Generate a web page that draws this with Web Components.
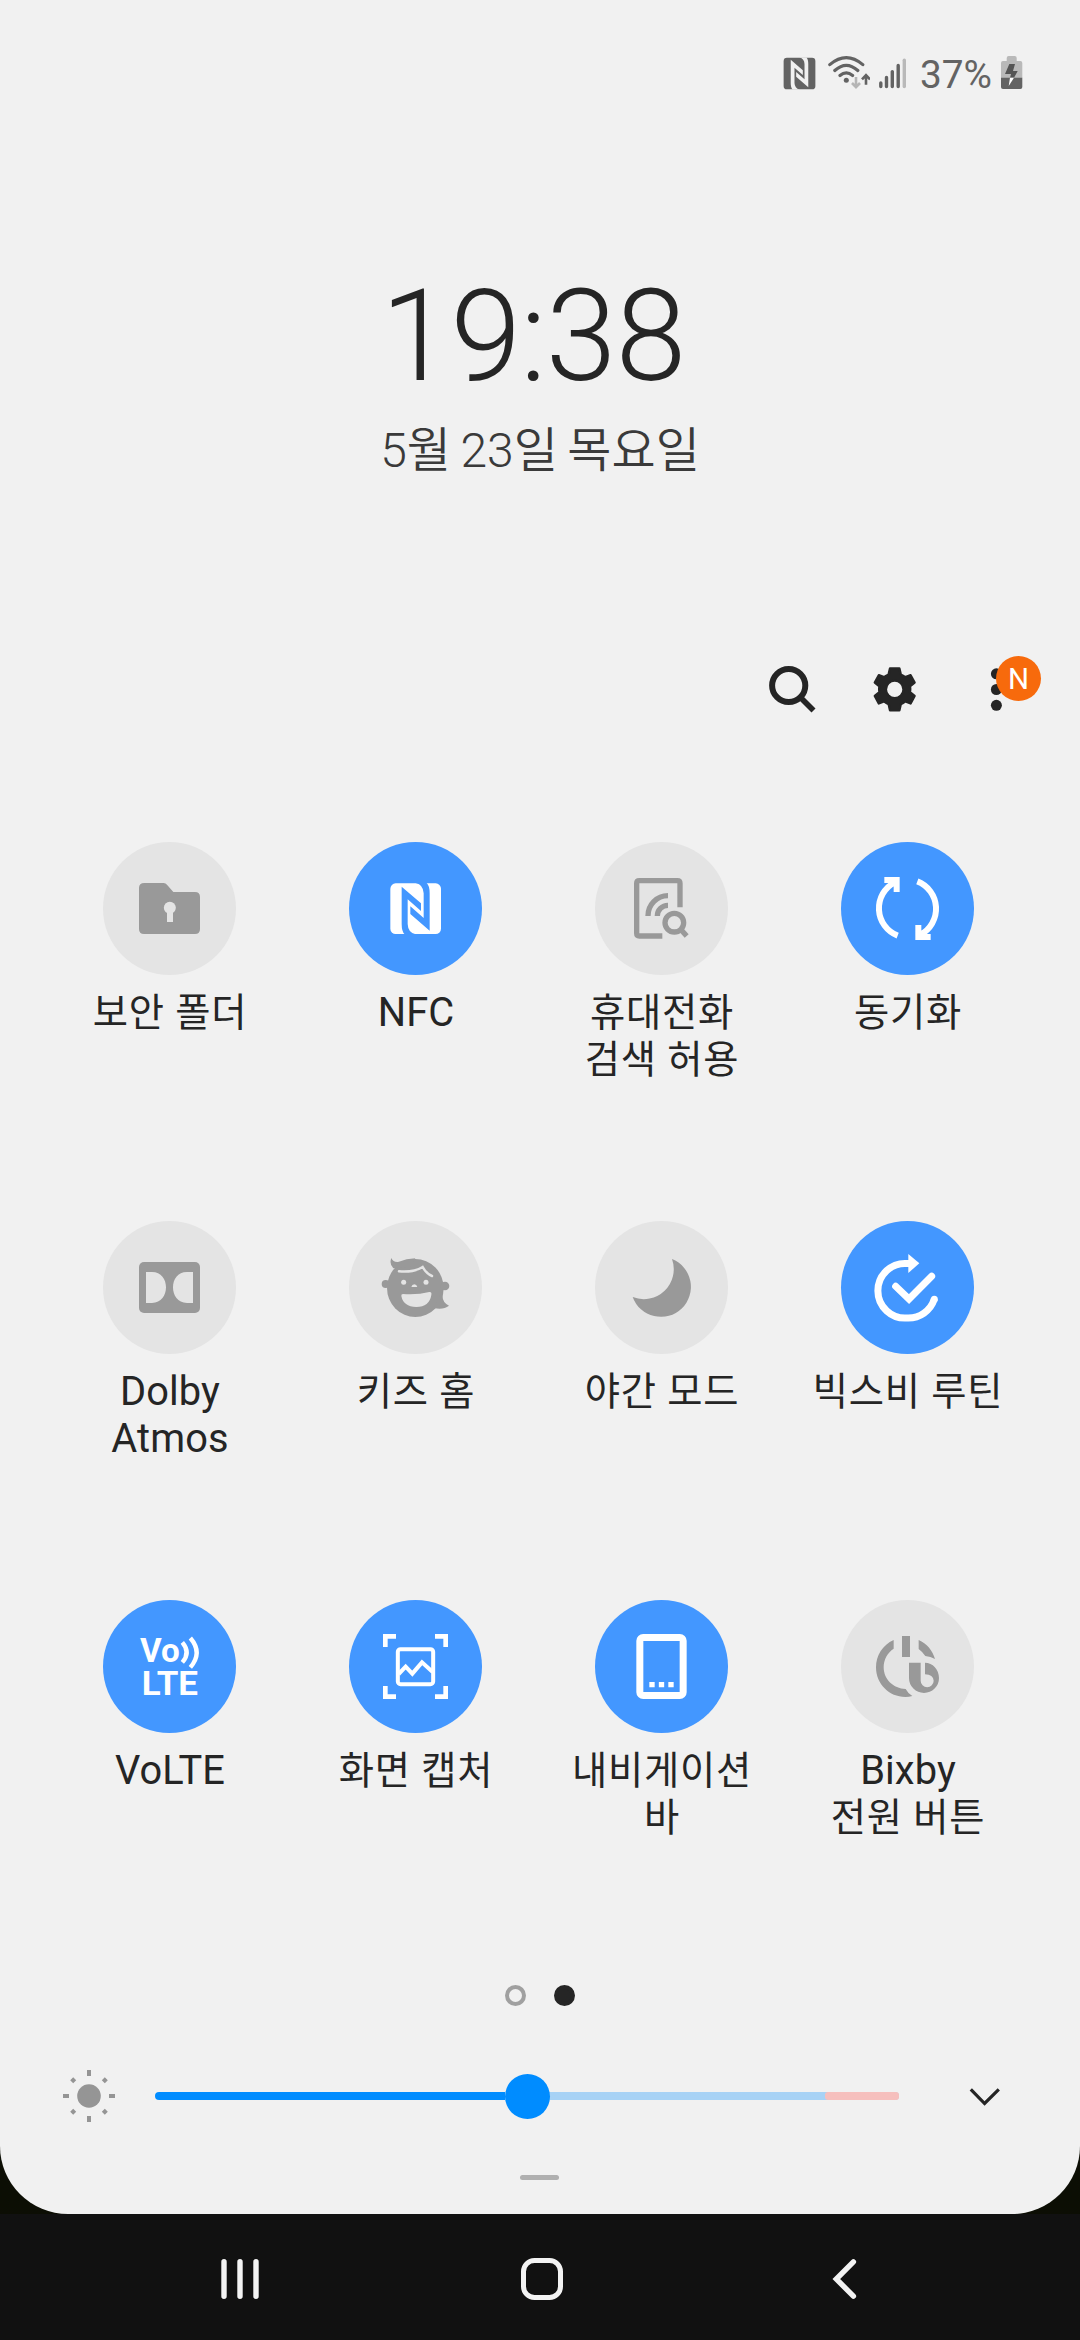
<!DOCTYPE html>
<html lang="ko">
<head>
<meta charset="utf-8">
<title>빠른 설정</title>
<style>
html,body{margin:0;padding:0}
body{width:1080px;height:2340px;overflow:hidden;background:#0c0e04;font-family:Roboto,"Noto Sans CJK KR",sans-serif}
</style>
</head>
<body>
<quick-panel>
  <status-bar></status-bar>
  <panel-clock><span slot="time">19:38</span><span slot="date">5월 23일 목요일</span></panel-clock>
  <panel-tools></panel-tools>
  <tile-grid>
    <quick-tile icon="folder"><span>보안 폴더</span></quick-tile>
    <quick-tile icon="nfc" on><span class="latin">NFC</span></quick-tile>
    <quick-tile icon="find"><span>휴대전화</span><span>검색 허용</span></quick-tile>
    <quick-tile icon="sync" on><span>동기화</span></quick-tile>
    <quick-tile icon="dolby"><span class="latin">Dolby</span><span class="latin">Atmos</span></quick-tile>
    <quick-tile icon="kids"><span>키즈 홈</span></quick-tile>
    <quick-tile icon="moon"><span>야간 모드</span></quick-tile>
    <quick-tile icon="routine" on><span>빅스비 루틴</span></quick-tile>
    <quick-tile icon="volte" on><span class="latin">VoLTE</span></quick-tile>
    <quick-tile icon="capture" on><span>화면 캡처</span></quick-tile>
    <quick-tile icon="navbar" on><span>내비게이션</span><span>바</span></quick-tile>
    <quick-tile icon="bixby"><span class="latin">Bixby</span><span>전원 버튼</span></quick-tile>
  </tile-grid>
  <page-dots></page-dots>
  <brightness-row></brightness-row>
  <panel-handle></panel-handle>
</quick-panel>
<nav-bar></nav-bar>
<script>
const define = (name, html) => customElements.define(name, class extends HTMLElement {
  constructor() {
    super();
    this.attachShadow({ mode: 'open' }).innerHTML = html;
  }
});

const NFC = `<rect x="931" y="190" width="152" height="152" rx="16" fill="currentColor"/>
<path fill="var(--cut)" d="M965 200L1023 250V273L983 238V312Q984 338 1007 343H974Q965 335 965 312ZM1049 332L991 282V259L1031 294V220Q1030 194 1007 189H1040Q1049 197 1049 220Z"/>`;

define('quick-panel', `<style>
:host{display:flex;flex-direction:column;height:2214px;background:#f1f1f1;border-radius:0 0 68px 68px;overflow:hidden;color:#252525}
</style><slot></slot>`);

define('status-bar', `<style>
:host{display:flex;height:146px;align-items:center;justify-content:flex-end;padding-right:57px;color:#636363;--cut:#f1f1f1}
svg{display:block;flex:none}
.wifi{margin-left:12px}.signal{margin-left:8px}
.pct{width:81px;margin-left:13px;padding-top:4px;font-size:38.8px;line-height:46px;white-space:nowrap}
</style>
<svg width="33" height="33" viewBox="928 188 158 156">${NFC}</svg>
<svg class="wifi" width="42" height="36" viewBox="828 55 42 36" fill="none" stroke="#636363" stroke-width="3.2">
<path d="M829.8 64.6Q846.3 50.6 862.8 64.6M834.8 70.5Q846.3 60.2 857.8 70.5M840 75.5Q846.3 70.3 852.6 75.5" stroke-linecap="round"/>
<circle cx="846.3" cy="80.2" r="2.5" fill="#636363" stroke="none"/>
<path d="M856 77V87M852 83L856 87.2L860 83" stroke="#b5b5b5" stroke-width="2.6"/>
<path d="M866 84.7V75M862 79.4L866 75.2L870 79.4" stroke-width="2.6"/></svg>
<svg class="signal" width="29" height="36" viewBox="878 55 29 36" fill="none" stroke="#636363" stroke-width="3.4" stroke-linecap="round">
<path d="M880.8 83V86.6M886.5 77.4V86.6M892.3 71.6V86.6M898.2 65.4V86.6"/><path d="M904.3 60.2V86.6" stroke="#b9b9b9"/></svg>
<span class="pct">37%</span>
<svg width="22" height="36" viewBox="1001 55 22 36"><path fill="#b9b9b9" d="M1006.7 61V58Q1006.7 56 1008.7 56H1014.7Q1016.7 56 1016.7 58V61H1020.3Q1022.3 61 1022.3 63V78H1001V63Q1001 61 1003 61Z"/>
<path fill="#636363" d="M1001 77.8H1022.3V87Q1022.3 89 1020.3 89H1003Q1001 89 1001 87Z"/>
<path fill="#555" d="M1009.3 64H1015L1013 71H1017.7L1014 77.8H1010L1011 74H1005Z"/><path fill="#fff" d="M1010 77.8H1014L1008.7 86Z"/></svg>`);

define('panel-clock', `<style>
:host{display:flex;flex-direction:column;align-items:center;padding-top:116px;font-weight:300}
.time{font-size:127.5px;line-height:150px;height:150px;letter-spacing:-1px;margin-right:14px;white-space:nowrap}
.date{font-size:48px;line-height:58px;height:58px;margin-top:10px;color:#3a3a3a;white-space:nowrap;font-weight:350;word-spacing:-2.2px}
</style><div class="time"><slot name="time"></slot></div><div class="date"><slot name="date"></slot></div>`);

define('panel-tools', `<style>
:host{display:flex;justify-content:flex-end;height:80px;margin-top:169px;padding-right:38px}
svg{display:block;flex:none}.gear{margin-left:54px}
.more{position:relative;margin-left:70px;width:52px;height:80px}
.badge{position:absolute;left:6px;top:7px;width:45px;height:45px;border-radius:50%;background:#f76a0c;color:#fff;font-size:29.5px;line-height:46px;text-align:center}
</style>
<svg width="50" height="80" viewBox="766 649 50 80" fill="none" stroke="#252525"><circle cx="788.7" cy="685.5" r="16.6" stroke-width="6"/><path d="M800 697L813.5 710.5" stroke-width="5.6"/></svg>
<svg class="gear" width="50" height="80" viewBox="870 649 50 80"><path fill="#252525" fill-rule="evenodd" stroke="#252525" stroke-width="2.4" stroke-linejoin="round" d="M890 668.5H899.4L900.8 674.5Q903 675.4 905.4 677.2L910.6 675.2L914.6 682.6L910 686.3Q910.5 689.3 910 692.3L914.6 696L910.6 703.4L905.4 701.4Q903 703.2 900.8 704.1L899.4 710.3H890L888.6 704.1Q886.4 703.2 884 701.4L878.8 703.4L874.8 696L879.4 692.3Q878.9 689.3 879.4 686.3L874.8 682.6L878.8 675.2L884 677.2Q886.4 675.4 888.6 674.5ZM894.7 680.6A8.8 8.8 0 1 0 894.7 698.2A8.8 8.8 0 1 0 894.7 680.6Z"/></svg>
<div class="more"><svg width="52" height="80" viewBox="990 649 52 80" fill="#252525"><circle cx="996.4" cy="673.8" r="5.5"/><circle cx="996.4" cy="689.5" r="5.5"/><circle cx="996.4" cy="705.3" r="5.5"/></svg><div class="badge">N</div></div>`);

define('tile-grid', `<style>
:host{display:grid;grid-template-columns:repeat(4,246px);grid-auto-rows:379px;margin-top:113px;padding-left:46.5px;padding-right:49.5px}
</style><slot></slot>`);

/* Each icon: origin of its 399-unit square, then its shapes. */
const ICONS = {
folder: ['69 66', `<path fill="currentColor" d="M193 189H251Q257 189 261 194L280 216H345Q360 216 360 231V327Q360 342 345 342H192Q177 342 177 327V204Q177 189 193 189Z"/><circle cx="269.500" cy="263" r="18" fill="var(--cut)"/><path fill="var(--cut)" d="M261 270H279V306H261Z"/>`],
nfc: ['807 66', NFC],
find: ['105 66', `<g fill="none" stroke="currentColor" stroke-width="16"><path d="M307 348H238Q230 348 230 340V190Q230 182 238 182H352Q360 182 360 190V262M264 288A60 60 0 0 1 324 227M292 288A32 32 0 0 1 324 256"/><circle cx="343" cy="308" r="28"/><path d="M361 327L380 348"/></g>`],
sync: ['843 66', `<path fill="none" stroke="currentColor" stroke-width="18" d="M1013 347A88 88 0 0 1 1004 187M1072 184A88 88 0 0 1 1081 344M973 180H1010V216M1112 351H1075V315"/>`],
dolby: ['69 63', `<rect x="177" y="186" width="183" height="153" rx="15" fill="currentColor"/><path fill="var(--cut)" d="M198 216H216C244 216 258 238 258 262S244 309 216 309H198ZM339 216H321C293 216 279 238 279 262S293 309 321 309H339Z"/>`],
kids: ['807 63', `<g fill="currentColor"><ellipse cx="1006" cy="264" rx="85" ry="87"/><circle cx="917" cy="252" r="12"/><circle cx="1095" cy="258" r="13"/><path d="M940 205Q927 192 934 174Q939 187 954 186Q980 175 1006 174.500L990 200ZM1091 264Q1079 305 1107 317Q1090 330 1062 324Z"/></g><g fill="var(--cut)"><circle cx="971" cy="247" r="7.500"/><circle cx="1038" cy="247" r="7.500"/><path d="M994 261Q996 253 1003 253T1012 261ZM969 282Q1012 285 1048 276Q1056 275 1054 285Q1048 321 1009 321Q970 320 964 288Q963 282 969 282Z"/></g><path fill="none" stroke="var(--cut)" stroke-width="7.500" stroke-linecap="round" d="M957 214Q1001 218 1028 201Q1040 222 1056 228"/>`],
moon: ['105 63', `<path fill="currentColor" d="M336 177A90 90 0 1 1 218 291A90 90 0 0 0 336 177Z"/>`],
routine: ['843 63', `<g fill="none" stroke="currentColor" stroke-width="21"><path d="M1047 190.500H1042A82 82 0 1 0 1042 354A82 82 0 0 0 1123 297"/><circle cx="1123" cy="298" r="10.500" fill="currentColor" stroke="none"/><path stroke-linecap="round" d="M1007 259L1047 297L1115 229"/></g><path fill="currentColor" d="M1045 162L1078 190L1045 219Z"/>`],
volte: ['69 60', `<g fill="currentColor" font-family="Roboto" font-weight="700"><text x="180" y="246" font-size="97" textLength="119" lengthAdjust="spacingAndGlyphs">Vo</text><text x="185" y="345" font-size="102" textLength="169" lengthAdjust="spacingAndGlyphs">LTE</text></g><path fill="none" stroke="currentColor" stroke-width="13" d="M307 187Q333 218 307 247M331 174Q369 218 331 262"/>`],
capture: ['807 60', `<g fill="none" stroke="currentColor" stroke-width="14"><path d="M916 201V169H948M1065 169H1097V201M916 318V350H948M1065 350H1097V318"/><rect x="953.500" y="207.500" width="106" height="105" rx="8" stroke-width="12"/><path stroke-width="12" d="M956 282L977 260L997 281L1026 247L1058 276"/></g>`],
navbar: ['105 60', `<rect x="239.500" y="172.500" width="130" height="174" rx="10" fill="none" stroke="currentColor" stroke-width="21"/><path fill="currentColor" d="M268 306h16v16h-16ZM296.500 306h16v16h-16ZM325 306h16v16h-16Z"/>`],
bixby: ['843 60', `<path fill="currentColor" d="M1026 168H1050V231H1026ZM1001 180C968 195 948 226 948 262C948 312 988 351 1036 351Q1047 351 1057 348Q1045 342 1037 327C1000 326 971 298 971 262C971 238 983 218 1001 206ZM1076 180C1100 190 1118 212 1125 237Q1112 229 1096 228Q1088 216 1076 207ZM1047 248H1082V302A19.500 19.500 0 0 0 1121 302Q1120 284 1095 283V248C1118 248 1137 268 1137 294A45 45 0 0 1 1047 294Z"/>`]
};

customElements.define('quick-tile', class extends HTMLElement {
  connectedCallback() {
    if (this.shadowRoot) return;
    const [origin, art] = ICONS[this.getAttribute('icon')];
    this.attachShadow({ mode: 'open' }).innerHTML = `<style>
:host{display:flex;flex-direction:column;align-items:center;color:#252525}
.disc{width:133px;height:133px;border-radius:50%;--cut:#e4e4e4;background:var(--cut);color:#999}
:host([on]) .disc{--cut:#4397ff;color:#fff}
svg{display:block}
.label{display:flex;flex-direction:column;align-items:center;margin-top:14px;padding-left:1px;font-size:38.3px;letter-spacing:.8px}
::slotted(span){display:block;height:47px;line-height:47px;white-space:nowrap}
::slotted(.latin){font-size:39.8px;letter-spacing:.1px}
</style><div class="disc"><svg width="133" height="133" viewBox="${origin} 399 399">${art}</svg></div><div class="label"><slot></slot></div>`;
  }
});

define('page-dots', `<style>
:host{display:flex;justify-content:center;gap:28px;margin-top:6px;height:21px}
i{box-sizing:border-box;width:21px;height:21px;border-radius:50%;border:4px solid #a0a0a0}
i+i{background:#252525;border-color:#252525}
</style><i></i><i></i>`);

define('brightness-row', `<style>
:host{display:flex;align-items:center;height:80px;margin-top:50px;padding-left:60px}
svg{display:block;flex:none}
.slider{display:flex;align-items:center;width:744px;margin:0 66px 0 37px}
.fill{width:350px;height:8px;border-radius:4px 0 0 4px;background:#008cff}
.thumb{position:relative;width:45px;height:45px;border-radius:50%;background:#008cff;flex:none}
.rest{display:flex;justify-content:flex-end;flex:1;height:8px;background:#a7d2f5;border-radius:0 4px 4px 0;margin-left:-3px}
.hot{width:74px;height:8px;border-radius:3px;background:#f6bfbd}
</style>
<svg width="58" height="80" viewBox="60 2056 58 80" fill="#959595"><circle cx="89" cy="2096" r="11.800"/><path d="M87 2070h4v6h-4ZM87 2116h4v6h-4ZM63 2094h6v4h-6ZM109 2094h6v4h-6ZM73.200 2077.200l3 3-3 3-3-3ZM104.800 2077.200l3 3-3 3-3-3ZM73.200 2108.800l3 3-3 3-3-3ZM104.800 2108.800l3 3-3 3-3-3Z"/></svg>
<div class="slider"><div class="fill"></div><div class="thumb"></div><div class="rest"><div class="hot"></div></div></div>
<svg width="40" height="80" viewBox="965 2056 40 80"><path d="M970.800 2089.300L984.600 2103.500L998.800 2089.300" fill="none" stroke="#252525" stroke-width="3.200"/></svg>`);

define('panel-handle', `<style>:host{display:block;width:39px;height:5px;margin:39px 0 0 520px;border-radius:2.500px;background:#b0b0b0}</style>`);

define('nav-bar', `<style>
:host{display:flex;gap:242px;height:126px;padding-left:210px;background:#111}
svg{display:block;flex:none}
</style>
<svg width="60" height="126" viewBox="210 2214 60 126" stroke="#f3f3f3" stroke-width="5.400" stroke-linecap="round"><path d="M224 2261.700V2296.300M240 2261.700V2296.300M256 2261.700V2296.300"/></svg>
<svg width="60" height="126" viewBox="512 2214 60 126"><rect x="523.500" y="2260.500" width="37" height="37" rx="11" fill="none" stroke="#f3f3f3" stroke-width="5"/></svg>
<svg width="60" height="126" viewBox="814 2214 60 126"><path d="M853.400 2261.800L836.300 2279L853.400 2296.200" fill="none" stroke="#f3f3f3" stroke-width="5.400" stroke-linecap="round"/></svg>`);
</script>
</body>
</html>
